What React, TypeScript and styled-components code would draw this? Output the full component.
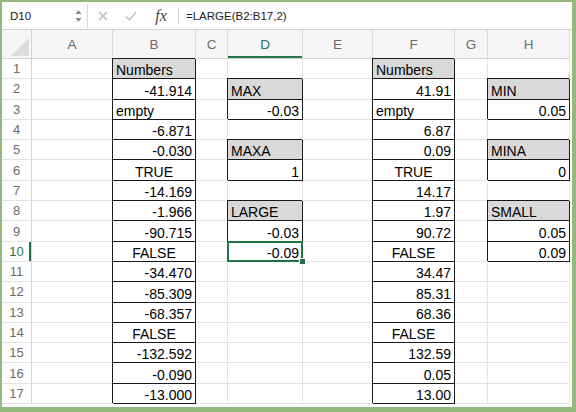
import { Fragment } from "react";
import styled, { createGlobalStyle } from "styled-components";

const GlobalStyle = createGlobalStyle`
  body {
    margin: 0;
    background: #fff;
    font-family: "Liberation Sans", Arial, sans-serif;
  }
`;

const GREEN = "#217346";

const Frame = styled.div`
  width: 576px;
  height: 412px;
  box-sizing: border-box;
  border: solid #93b97c;
  border-width: 2px 4px 5px 2px;
  background: #fff;
  overflow: hidden;
`;

const FormulaBar = styled.div`
  height: 28px;
  box-sizing: border-box;
  display: flex;
  align-items: center;
  border-bottom: 1px solid #cfcfcf;
  font-size: 11.5px;
  color: #222;
`;

const NameBox = styled.div`
  width: 86px;
  height: 24px;
  box-sizing: border-box;
  display: flex;
  align-items: center;
  justify-content: space-between;
  padding: 0 5px 0 8px;
  border-right: 1px solid #d6d6d6;
`;

const Slot = styled.div<{ $w: number }>`
  width: ${(p) => p.$w}px;
  display: flex;
  justify-content: center;
  align-items: center;
`;

const Fx = styled.span`
  font-family: "Liberation Serif", "Times New Roman", serif;
  font-style: italic;
  font-size: 16px;
  color: #444;
`;

const Divider = styled.div`
  width: 1px;
  height: 16px;
  background: #d6d6d6;
`;

const FormulaText = styled.div`
  padding-left: 7px;
`;

const Sheet = styled.div`
  display: grid;
  grid-template-columns: 30px 81px 83px 32px 75px 70px 82px 33px 82px;
  grid-template-rows: 29px repeat(17, 20.3px);
`;

const Corner = styled.div`
  background: #f6f6f6;
  border-right: 1px solid #d4d4d4;
  border-bottom: 1px solid #d4d4d4;
  display: flex;
  align-items: flex-end;
  justify-content: flex-end;
  padding: 0 2px 2px 0;
`;

const ColHeader = styled.div<{ $active?: boolean }>`
  background: #f6f6f6;
  border-right: 1px solid #dcdcdc;
  border-bottom: 1px solid #d4d4d4;
  display: flex;
  align-items: center;
  justify-content: center;
  font-size: 13.5px;
  color: ${(p) => (p.$active ? GREEN : "#6b6b6b")};
  box-shadow: ${(p) => (p.$active ? `inset 0 -2px 0 ${GREEN}` : "none")};
`;

const RowHeader = styled.div<{ $active?: boolean }>`
  border-right: 1px solid #d4d4d4;
  border-bottom: 1px solid #e3e3e3;
  display: flex;
  align-items: center;
  justify-content: center;
  font-size: 13px;
  color: ${(p) => (p.$active ? GREEN : "#6b6b6b")};
  box-shadow: ${(p) => (p.$active ? `inset -2px 0 0 ${GREEN}` : "none")};
`;

const Cell = styled.div<{
  $align: "left" | "right" | "center";
  $boxed?: boolean;
  $fill?: boolean;
  $selected?: boolean;
}>`
  position: relative;
  box-sizing: border-box;
  display: flex;
  align-items: flex-end;
  justify-content: ${(p) =>
    p.$align === "left" ? "flex-start" : p.$align === "right" ? "flex-end" : "center"};
  padding: 0 3px;
  font-size: 14px;
  line-height: 16px;
  color: #000;
  white-space: nowrap;
  border-right: 1px solid ${(p) => (p.$boxed ? "#1a1a1a" : "#e3e3e3")};
  border-bottom: 1px solid ${(p) => (p.$boxed ? "#1a1a1a" : "#e3e3e3")};
  box-shadow: ${(p) => (p.$boxed ? "-1px -1px 0 #1a1a1a" : "none")};
  background: ${(p) => (p.$fill ? "#d9d9d9" : "transparent")};

  ${(p) =>
    p.$selected &&
    `
    &::before {
      content: "";
      position: absolute;
      left: -1px;
      top: -1px;
      right: -1px;
      bottom: -1px;
      border: 2px solid ${GREEN};
      z-index: 2;
    }
    &::after {
      content: "";
      position: absolute;
      right: -4px;
      bottom: -4px;
      width: 5px;
      height: 5px;
      background: ${GREEN};
      border: 1px solid #fff;
      z-index: 3;
    }
  `}
`;

const COLS = ["A", "B", "C", "D", "E", "F", "G", "H"];

const colB = [
  "Numbers", "-41.914", "empty", "-6.871", "-0.030", "TRUE", "-14.169", "-1.966",
  "-90.715", "FALSE", "-34.470", "-85.309", "-68.357", "FALSE", "-132.592", "-0.090", "-13.000",
];
const colF = [
  "Numbers", "41.91", "empty", "6.87", "0.09", "TRUE", "14.17", "1.97",
  "90.72", "FALSE", "34.47", "85.31", "68.36", "FALSE", "132.59", "0.05", "13.00",
];

const toMap = (list: string[]) =>
  Object.fromEntries(list.map((v, i) => [i + 1, v])) as Record<number, string>;

const data: Record<string, Record<number, string>> = {
  B: toMap(colB),
  F: toMap(colF),
  D: { 2: "MAX", 3: "-0.03", 5: "MAXA", 6: "1", 8: "LARGE", 9: "-0.03", 10: "-0.09" },
  H: { 2: "MIN", 3: "0.05", 5: "MINA", 6: "0", 8: "SMALL", 9: "0.05", 10: "0.09" },
};

const labels = ["Numbers", "MAX", "MAXA", "LARGE", "MIN", "MINA", "SMALL"];

function alignOf(v: string): "left" | "right" | "center" {
  if (/^-?\d/.test(v)) return "right";
  if (v === "TRUE" || v === "FALSE") return "center";
  return "left";
}

function Stepper() {
  return (
    <svg width="7" height="14" viewBox="0 0 7 14">
      <path d="M3.5 1 L6.5 5 L0.5 5 Z" fill="#8a8a8a" />
      <path d="M3.5 13 L6.5 9 L0.5 9 Z" fill="#8a8a8a" />
    </svg>
  );
}

function App() {
  const rows = Array.from({ length: 17 }, (_, i) => i + 1);
  return (
    <>
      <GlobalStyle />
      <Frame>
        <FormulaBar>
          <NameBox>
            <span>D10</span>
            <Stepper />
          </NameBox>
          <Slot $w={30}>
            <svg width="10" height="10" viewBox="0 0 10 10">
              <path d="M1 1 L9 9 M9 1 L1 9" stroke="#b8b8b8" strokeWidth="1.2" />
            </svg>
          </Slot>
          <Slot $w={26}>
            <svg width="12" height="10" viewBox="0 0 12 10">
              <path d="M1 5.5 L4.5 9 L11 1" stroke="#b8b8b8" strokeWidth="1.2" fill="none" />
            </svg>
          </Slot>
          <Slot $w={34}>
            <Fx>fx</Fx>
          </Slot>
          <Divider />
          <FormulaText>=LARGE(B2:B17,2)</FormulaText>
        </FormulaBar>
        <Sheet>
          <Corner>
            <svg width="18" height="18" viewBox="0 0 18 18">
              <path d="M18 0 L18 18 L0 18 Z" fill="#dcdcdc" />
            </svg>
          </Corner>
          {COLS.map((c) => (
            <ColHeader key={c} $active={c === "D"}>
              {c}
            </ColHeader>
          ))}
          {rows.map((r) => (
            <Fragment key={r}>
              <RowHeader $active={r === 10}>{r}</RowHeader>
              {COLS.map((c) => {
                const v = data[c]?.[r];
                return (
                  <Cell
                    key={`${c}${r}`}
                    $align={v ? alignOf(v) : "left"}
                    $boxed={v !== undefined}
                    $fill={v !== undefined && labels.includes(v)}
                    $selected={c === "D" && r === 10}
                  >
                    {v}
                  </Cell>
                );
              })}
            </Fragment>
          ))}
        </Sheet>
      </Frame>
    </>
  );
}

export default App;
